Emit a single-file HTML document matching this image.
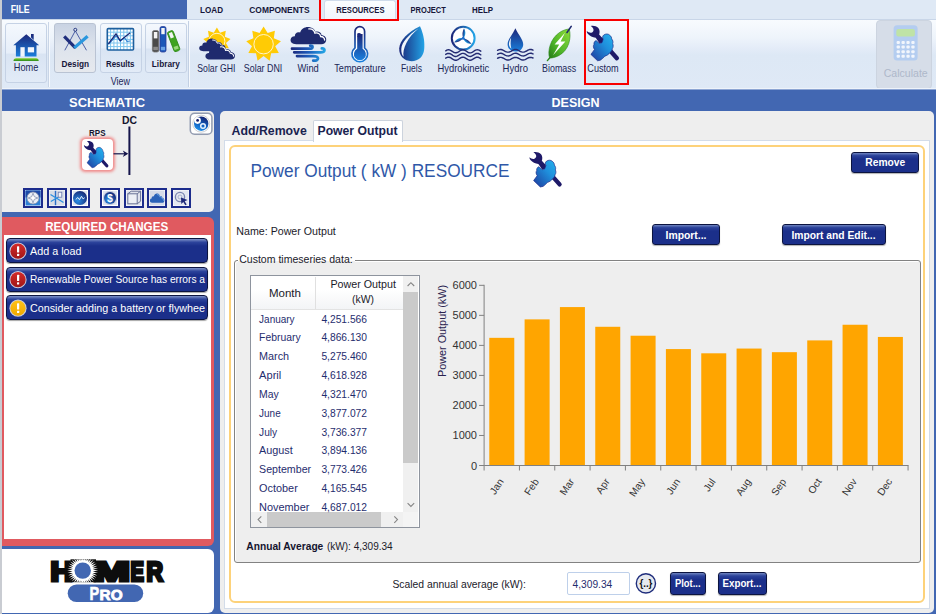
<!DOCTYPE html>
<html lang="en"><head><meta charset="utf-8"><title>HOMER Pro - Power Output Resource</title>
<style>
html,body{margin:0;padding:0;background:#4267b2}
body{width:936px;height:614px;overflow:hidden;position:relative;font-family:"Liberation Sans",sans-serif}
#app{position:absolute;left:0;top:0;width:936px;height:614px;overflow:hidden}
#app div{position:absolute}
#ov{position:absolute;left:0;top:0}
#ov text{font-family:"Liberation Sans",sans-serif}
</style></head>
<body><div id="app">
<div style="left:0px;top:0px;width:936px;height:19px;background:#dfe9f5"></div>
<div style="left:2px;top:0px;width:185px;height:19px;background:#4267b2"></div>
<div style="left:324.4px;top:0px;width:71.6px;height:19px;background:linear-gradient(#fbfdff,#f1f6fc);border:1px solid #cfdbeb;border-bottom:none;box-sizing:border-box;border-radius:3px 3px 0 0"></div>
<div style="left:319px;top:-2px;width:80px;height:22.5px;border:2.2px solid #f80000;box-sizing:border-box;z-index:3"></div>
<div style="left:0px;top:19px;width:936px;height:70.7px;background:linear-gradient(#f8fbfe 0%,#eef4fb 25%,#e4ecf8 40%,#dde8f5 50%,#dfe9f6 100%);border-top:1px solid #c9d6e8;box-sizing:border-box"></div>
<div style="left:188px;top:21px;width:1px;height:66px;background:#c3d0e3"></div>
<div style="left:189px;top:21px;width:1px;height:66px;background:#f6f9fd"></div>
<div style="left:48px;top:22px;width:1px;height:65px;background:#c9d5e6"></div>
<div style="left:49px;top:22px;width:1px;height:65px;background:#f6f9fd"></div>
<div style="left:5px;top:23px;width:41.5px;height:60px;border:1px solid #c5d2e5;border-radius:3px;box-sizing:border-box;background:linear-gradient(#f4f8fd 0%,#e6eef9 50%,#d9e4f3 52%,#e2ebf7 100%)"></div>
<div style="left:54px;top:23px;width:42px;height:50px;border:1px solid #b9c3d3;border-radius:3px;box-sizing:border-box;background:linear-gradient(#c9d3e3 0%,#dde3ec 45%,#e6e9ee 100%)"></div>
<div style="left:100px;top:23px;width:42px;height:50px;border:1px solid #c5d2e5;border-radius:3px;box-sizing:border-box;background:linear-gradient(#f4f8fd 0%,#e6eef9 50%,#d9e4f3 52%,#e2ebf7 100%)"></div>
<div style="left:145px;top:23px;width:42px;height:50px;border:1px solid #c5d2e5;border-radius:3px;box-sizing:border-box;background:linear-gradient(#f4f8fd 0%,#e6eef9 50%,#d9e4f3 52%,#e2ebf7 100%)"></div>
<div style="left:584.2px;top:19.2px;width:44.8px;height:66px;border:2.2px solid #f80000;box-sizing:border-box"></div>
<div style="left:876px;top:20px;width:56px;height:69px;background:#d6dde8;border-radius:4px;border:1px solid #ccd4e0;box-sizing:border-box"></div>
<div style="left:0px;top:89px;width:936px;height:525px;background:#4267b2"></div>
<div style="left:0px;top:89px;width:936px;height:1px;background:#8ea6d4"></div>
<div style="left:0px;top:88px;width:936px;height:1px;background:#eef3fa"></div>
<div style="left:0px;top:19px;width:2px;height:595px;background:#c9ccd2"></div>
<div style="left:0px;top:0px;width:2px;height:19px;background:#c9ccd2"></div>
<div style="left:2px;top:111px;width:212px;height:101px;background:#eeeeee;border-radius:0 5px 5px 0"></div>
<div style="left:82px;top:139px;width:31px;height:31px;background:#fff;border-radius:4px;box-shadow:0 0 3px 1.5px #f08a8a"></div>
<div style="left:23px;top:188px;width:20px;height:20px;background:#dfe6f0;border:2px solid #1c2c8c;box-sizing:border-box;box-shadow:inset 0 0 0 1px #fff"></div>
<div style="left:47px;top:188px;width:20px;height:20px;background:#dfe6f0;border:2px solid #1c2c8c;box-sizing:border-box;box-shadow:inset 0 0 0 1px #fff"></div>
<div style="left:70px;top:188px;width:20px;height:20px;background:#dfe6f0;border:2px solid #1c2c8c;box-sizing:border-box;box-shadow:inset 0 0 0 1px #fff"></div>
<div style="left:100px;top:188px;width:20px;height:20px;background:#dfe6f0;border:2px solid #1c2c8c;box-sizing:border-box;box-shadow:inset 0 0 0 1px #fff"></div>
<div style="left:124px;top:188px;width:20px;height:20px;background:#dfe6f0;border:2px solid #1c2c8c;box-sizing:border-box;box-shadow:inset 0 0 0 1px #fff"></div>
<div style="left:147px;top:188px;width:20px;height:20px;background:#dfe6f0;border:2px solid #1c2c8c;box-sizing:border-box;box-shadow:inset 0 0 0 1px #fff"></div>
<div style="left:171px;top:188px;width:20px;height:20px;background:#dfe6f0;border:2px solid #1c2c8c;box-sizing:border-box;box-shadow:inset 0 0 0 1px #fff"></div>
<div style="left:2px;top:217px;width:212.3px;height:328.5px;background:#e05a60;border-radius:0 6px 6px 0"></div>
<div style="left:3.5px;top:235px;width:207px;height:303.5px;background:#fff"></div>
<div style="left:5.5px;top:238px;width:202.5px;height:25px;border-radius:4px;border:1px solid #0c1440;box-sizing:border-box;background:linear-gradient(#7f93c9 0%,#2d449c 14%,#1b2f8a 30%,#1b2f8a 100%);box-shadow:0 1px 1px rgba(0,0,0,.35)"></div>
<div style="left:5.5px;top:266.5px;width:202.5px;height:25px;border-radius:4px;border:1px solid #0c1440;box-sizing:border-box;background:linear-gradient(#7f93c9 0%,#2d449c 14%,#1b2f8a 30%,#1b2f8a 100%);box-shadow:0 1px 1px rgba(0,0,0,.35)"></div>
<div style="left:5.5px;top:295px;width:202.5px;height:25px;border-radius:4px;border:1px solid #0c1440;box-sizing:border-box;background:linear-gradient(#7f93c9 0%,#2d449c 14%,#1b2f8a 30%,#1b2f8a 100%);box-shadow:0 1px 1px rgba(0,0,0,.35)"></div>
<div style="left:2px;top:548.7px;width:212.3px;height:64.5px;background:#fff;border-radius:0 6px 6px 0"></div>
<div style="left:219.7px;top:111px;width:714.3px;height:501.6px;background:#eeeeee;border-radius:5px"></div>
<div style="left:224.1px;top:140.3px;width:705.9px;height:468.7px;background:#fff;border:1px solid #d3dce9;box-sizing:border-box"></div>
<div style="left:312.5px;top:120px;width:90px;height:22px;background:#fff;border:1px solid #ccd3dd;border-bottom:none;box-sizing:border-box;border-radius:2px 2px 0 0"></div>
<div style="left:229px;top:145px;width:696px;height:458px;border:2px solid #fdd27a;border-radius:6px;box-sizing:border-box;background:#fff"></div>
<div style="left:851px;top:151.5px;width:67.5px;height:21px;border-radius:3px;border:1px solid #0c1440;box-sizing:border-box;background:linear-gradient(#6f84c0 0%,#2b429a 14%,#1b2f8a 32%,#1b2f8a 100%);box-shadow:0 1px 1px rgba(0,0,0,.3)"></div>
<div style="left:651.5px;top:223.5px;width:68px;height:21.5px;border-radius:3px;border:1px solid #0c1440;box-sizing:border-box;background:linear-gradient(#6f84c0 0%,#2b429a 14%,#1b2f8a 32%,#1b2f8a 100%);box-shadow:0 1px 1px rgba(0,0,0,.3)"></div>
<div style="left:781.5px;top:223.5px;width:104px;height:21.5px;border-radius:3px;border:1px solid #0c1440;box-sizing:border-box;background:linear-gradient(#6f84c0 0%,#2b429a 14%,#1b2f8a 32%,#1b2f8a 100%);box-shadow:0 1px 1px rgba(0,0,0,.3)"></div>
<div style="left:669.5px;top:572.4px;width:36px;height:23px;border-radius:3px;border:1px solid #0c1440;box-sizing:border-box;background:linear-gradient(#6f84c0 0%,#2b429a 14%,#1b2f8a 32%,#1b2f8a 100%);box-shadow:0 1px 1px rgba(0,0,0,.3)"></div>
<div style="left:717.5px;top:572.4px;width:49px;height:23px;border-radius:3px;border:1px solid #0c1440;box-sizing:border-box;background:linear-gradient(#6f84c0 0%,#2b429a 14%,#1b2f8a 32%,#1b2f8a 100%);box-shadow:0 1px 1px rgba(0,0,0,.3)"></div>
<div style="left:233.5px;top:260px;width:687px;height:302.5px;background:#eeeeee;border:1px solid #828282;border-radius:3px;box-sizing:border-box;box-shadow:1px 1px 0 #fff, inset 1px 1px 0 #fff"></div>
<div style="left:237.5px;top:255px;width:117px;height:12px;background:#fff"></div>
<div style="left:237.5px;top:260px;width:117px;height:8px;background:linear-gradient(#fff 0,#fff 1px,#eeeeee 1px)"></div>
<div style="left:250.4px;top:275px;width:170px;height:253px;background:#fff;border:1px solid #8e949e;box-sizing:border-box"></div>
<div style="left:251.4px;top:276px;width:151.6px;height:34px;background:linear-gradient(#ffffff 40%,#f3f4f6 100%);border-bottom:1px solid #e3e3e3;box-sizing:border-box"></div>
<div style="left:315px;top:277px;width:1px;height:32px;background:#e0e0e0"></div>
<div style="left:403px;top:276px;width:15px;height:236px;background:#f0f0f0"></div>
<div style="left:403px;top:292px;width:15px;height:170.5px;background:#cacaca"></div>
<div style="left:251.4px;top:512px;width:151.6px;height:15px;background:#f0f0f0"></div>
<div style="left:267px;top:512px;width:114px;height:15px;background:#cacaca"></div>
<div style="left:403px;top:512px;width:15px;height:15px;background:#f4f4f4"></div>
<div style="left:567.4px;top:572.4px;width:62.5px;height:22.5px;background:#fff;border:1px solid #bed0ea;box-sizing:border-box;border-radius:2px"></div>
<svg id="ov" width="936" height="614" viewBox="0 0 936 614">
<rect x="489.27" y="337.83" width="25" height="127.67" fill="#ffa500"/>
<text transform="translate(504.07,481.5) rotate(-56)" text-anchor="end" font-size="10.2" fill="#333">Jan</text>
<rect x="524.60" y="319.37" width="25" height="146.13" fill="#ffa500"/>
<text transform="translate(539.39,481.5) rotate(-56)" text-anchor="end" font-size="10.2" fill="#333">Feb</text>
<rect x="559.92" y="307.08" width="25" height="158.42" fill="#ffa500"/>
<text transform="translate(574.72,481.5) rotate(-56)" text-anchor="end" font-size="10.2" fill="#333">Mar</text>
<rect x="595.25" y="326.79" width="25" height="138.71" fill="#ffa500"/>
<text transform="translate(610.05,481.5) rotate(-56)" text-anchor="end" font-size="10.2" fill="#333">Apr</text>
<rect x="630.59" y="335.73" width="25" height="129.77" fill="#ffa500"/>
<text transform="translate(645.38,481.5) rotate(-56)" text-anchor="end" font-size="10.2" fill="#333">May</text>
<rect x="665.91" y="349.07" width="25" height="116.43" fill="#ffa500"/>
<text transform="translate(680.71,481.5) rotate(-56)" text-anchor="end" font-size="10.2" fill="#333">Jun</text>
<rect x="701.25" y="353.30" width="25" height="112.20" fill="#ffa500"/>
<text transform="translate(716.04,481.5) rotate(-56)" text-anchor="end" font-size="10.2" fill="#333">Jul</text>
<rect x="736.58" y="348.56" width="25" height="116.94" fill="#ffa500"/>
<text transform="translate(751.38,481.5) rotate(-56)" text-anchor="end" font-size="10.2" fill="#333">Aug</text>
<rect x="771.90" y="352.18" width="25" height="113.32" fill="#ffa500"/>
<text transform="translate(786.70,481.5) rotate(-56)" text-anchor="end" font-size="10.2" fill="#333">Sep</text>
<rect x="807.24" y="340.41" width="25" height="125.09" fill="#ffa500"/>
<text transform="translate(822.03,481.5) rotate(-56)" text-anchor="end" font-size="10.2" fill="#333">Oct</text>
<rect x="842.57" y="324.75" width="25" height="140.75" fill="#ffa500"/>
<text transform="translate(857.37,481.5) rotate(-56)" text-anchor="end" font-size="10.2" fill="#333">Nov</text>
<rect x="877.89" y="336.94" width="25" height="128.56" fill="#ffa500"/>
<text transform="translate(892.69,481.5) rotate(-56)" text-anchor="end" font-size="10.2" fill="#333">Dec</text>
<path d="M484.1,284.82V465.5H908.56" fill="none" stroke="#808080" stroke-width="1"/>
<path d="M484.10,465.5v5" stroke="#808080" stroke-width="1"/>
<path d="M519.43,465.5v5" stroke="#808080" stroke-width="1"/>
<path d="M554.76,465.5v5" stroke="#808080" stroke-width="1"/>
<path d="M590.09,465.5v5" stroke="#808080" stroke-width="1"/>
<path d="M625.42,465.5v5" stroke="#808080" stroke-width="1"/>
<path d="M660.75,465.5v5" stroke="#808080" stroke-width="1"/>
<path d="M696.08,465.5v5" stroke="#808080" stroke-width="1"/>
<path d="M731.41,465.5v5" stroke="#808080" stroke-width="1"/>
<path d="M766.74,465.5v5" stroke="#808080" stroke-width="1"/>
<path d="M802.07,465.5v5" stroke="#808080" stroke-width="1"/>
<path d="M837.40,465.5v5" stroke="#808080" stroke-width="1"/>
<path d="M872.73,465.5v5" stroke="#808080" stroke-width="1"/>
<path d="M908.06,465.5v5" stroke="#808080" stroke-width="1"/>
<path d="M479.1,465.50h5" stroke="#808080" stroke-width="1"/>
<text x="477" y="469.5" font-size="11" fill="#333" text-anchor="end">0</text>
<path d="M479.1,435.47h5" stroke="#808080" stroke-width="1"/>
<text x="477" y="439.47" font-size="11" fill="#333" text-anchor="end">1000</text>
<path d="M479.1,405.44h5" stroke="#808080" stroke-width="1"/>
<text x="477" y="409.44" font-size="11" fill="#333" text-anchor="end">2000</text>
<path d="M479.1,375.41h5" stroke="#808080" stroke-width="1"/>
<text x="477" y="379.41" font-size="11" fill="#333" text-anchor="end">3000</text>
<path d="M479.1,345.38h5" stroke="#808080" stroke-width="1"/>
<text x="477" y="349.38" font-size="11" fill="#333" text-anchor="end">4000</text>
<path d="M479.1,315.35h5" stroke="#808080" stroke-width="1"/>
<text x="477" y="319.35" font-size="11" fill="#333" text-anchor="end">5000</text>
<path d="M479.1,285.32h5" stroke="#808080" stroke-width="1"/>
<text x="477" y="289.32" font-size="11" fill="#333" text-anchor="end">6000</text>
<text transform="translate(445.5,377) rotate(-90)" font-size="11" fill="#2a2350" textLength="92" lengthAdjust="spacingAndGlyphs">Power Output (kW)</text>
<text x="10.7" y="13.2" font-size="11" font-weight="700" fill="#fff" textLength="19" lengthAdjust="spacingAndGlyphs">FILE</text>
<text x="200" y="12.7" font-size="9.8" font-weight="700" fill="#16163a" textLength="23" lengthAdjust="spacingAndGlyphs">LOAD</text>
<text x="249.3" y="12.7" font-size="9.8" font-weight="700" fill="#16163a" textLength="60.2" lengthAdjust="spacingAndGlyphs">COMPONENTS</text>
<text x="336.3" y="12.7" font-size="9.8" font-weight="700" fill="#16163a" textLength="48.2" lengthAdjust="spacingAndGlyphs">RESOURCES</text>
<text x="410.5" y="12.7" font-size="9.8" font-weight="700" fill="#16163a" textLength="35.3" lengthAdjust="spacingAndGlyphs">PROJECT</text>
<text x="472.1" y="12.7" font-size="9.8" font-weight="700" fill="#16163a" textLength="21" lengthAdjust="spacingAndGlyphs">HELP</text>
<text x="13.8" y="71.3" font-size="10.3" fill="#1b2656" textLength="24.5" lengthAdjust="spacingAndGlyphs">Home</text>
<text x="61.5" y="67.3" font-size="9.3" font-weight="700" fill="#16163a" textLength="27.5" lengthAdjust="spacingAndGlyphs">Design</text>
<text x="106" y="67.3" font-size="9.3" font-weight="700" fill="#16163a" textLength="28.5" lengthAdjust="spacingAndGlyphs">Results</text>
<text x="151.8" y="67.3" font-size="9.3" font-weight="700" fill="#16163a" textLength="28" lengthAdjust="spacingAndGlyphs">Library</text>
<text x="110.8" y="85" font-size="10.3" fill="#1b2656" textLength="19.2" lengthAdjust="spacingAndGlyphs">View</text>
<text x="197.3" y="71.7" font-size="10.3" fill="#1b2656" textLength="38.1" lengthAdjust="spacingAndGlyphs">Solar GHI</text>
<text x="243.8" y="71.7" font-size="10.3" fill="#1b2656" textLength="38.5" lengthAdjust="spacingAndGlyphs">Solar DNI</text>
<text x="297.5" y="71.7" font-size="10.3" fill="#1b2656" textLength="21.3" lengthAdjust="spacingAndGlyphs">Wind</text>
<text x="334.3" y="71.7" font-size="10.3" fill="#1b2656" textLength="51.2" lengthAdjust="spacingAndGlyphs">Temperature</text>
<text x="401" y="71.7" font-size="10.3" fill="#1b2656" textLength="21" lengthAdjust="spacingAndGlyphs">Fuels</text>
<text x="437.4" y="71.7" font-size="10.3" fill="#1b2656" textLength="51.8" lengthAdjust="spacingAndGlyphs">Hydrokinetic</text>
<text x="502.6" y="71.7" font-size="10.3" fill="#1b2656" textLength="25.4" lengthAdjust="spacingAndGlyphs">Hydro</text>
<text x="542.1" y="71.7" font-size="10.3" fill="#1b2656" textLength="34" lengthAdjust="spacingAndGlyphs">Biomass</text>
<text x="587.3" y="71.7" font-size="10.3" fill="#1b2656" textLength="31.4" lengthAdjust="spacingAndGlyphs">Custom</text>
<text x="883.7" y="76.7" font-size="11" fill="#aeb8ca" textLength="44" lengthAdjust="spacingAndGlyphs">Calculate</text>
<text x="69" y="107" font-size="13" font-weight="700" fill="#fff" textLength="76" lengthAdjust="spacingAndGlyphs">SCHEMATIC</text>
<text x="551.5" y="107" font-size="13" font-weight="700" fill="#fff" textLength="48" lengthAdjust="spacingAndGlyphs">DESIGN</text>
<text x="89" y="135.8" font-size="9.5" font-weight="700" fill="#14142e" textLength="16.5" lengthAdjust="spacingAndGlyphs">RPS</text>
<text x="122" y="124.4" font-size="11.5" font-weight="700" fill="#14142e" textLength="15" lengthAdjust="spacingAndGlyphs">DC</text>
<text x="45.2" y="230.8" font-size="12" font-weight="700" fill="#fff" textLength="123" lengthAdjust="spacingAndGlyphs">REQUIRED CHANGES</text>
<text x="30" y="254.9" font-size="11.5" fill="#fff" textLength="51.5" lengthAdjust="spacingAndGlyphs">Add a load</text>
<text x="30" y="283.4" font-size="11.5" fill="#fff" textLength="175" lengthAdjust="spacingAndGlyphs">Renewable Power Source has errors a</text>
<text x="30" y="311.9" font-size="11.5" fill="#fff" textLength="175" lengthAdjust="spacingAndGlyphs">Consider adding a battery or flywhee</text>
<text x="231.6" y="134.7" font-size="12.5" font-weight="700" fill="#1a2350" textLength="75.2" lengthAdjust="spacingAndGlyphs">Add/Remove</text>
<text x="317.5" y="134.7" font-size="12.5" font-weight="700" fill="#1a2350" textLength="80" lengthAdjust="spacingAndGlyphs">Power Output</text>
<text x="250.5" y="177" font-size="18" fill="#2f58a8" textLength="259" lengthAdjust="spacingAndGlyphs">Power Output ( kW ) RESOURCE</text>
<text x="236.3" y="235.4" font-size="11.5" fill="#1a1a2a" textLength="99.5" lengthAdjust="spacingAndGlyphs">Name: Power Output</text>
<text x="239.2" y="263" font-size="11.5" fill="#1a1a2a" textLength="113.5" lengthAdjust="spacingAndGlyphs">Custom timeseries data:</text>
<text x="865.3" y="165.8" font-size="11" font-weight="700" fill="#fff" textLength="40" lengthAdjust="spacingAndGlyphs">Remove</text>
<text x="665.5" y="238.5" font-size="11" font-weight="700" fill="#fff" textLength="41" lengthAdjust="spacingAndGlyphs">Import...</text>
<text x="791.5" y="238.5" font-size="11" font-weight="700" fill="#fff" textLength="84" lengthAdjust="spacingAndGlyphs">Import and Edit...</text>
<text x="675" y="587.2" font-size="11" font-weight="700" fill="#fff" textLength="25.5" lengthAdjust="spacingAndGlyphs">Plot...</text>
<text x="722.5" y="587.2" font-size="11" font-weight="700" fill="#fff" textLength="39" lengthAdjust="spacingAndGlyphs">Export...</text>
<text x="392.4" y="587.7" font-size="11.5" fill="#1a1a2a" textLength="133.5" lengthAdjust="spacingAndGlyphs">Scaled annual average (kW):</text>
<text x="572.6" y="587.7" font-size="11.5" fill="#1f2d6e" textLength="39.7" lengthAdjust="spacingAndGlyphs">4,309.34</text>
<text x="246.3" y="549.6" font-size="11.5" font-weight="700" fill="#14142e" textLength="77" lengthAdjust="spacingAndGlyphs">Annual Average</text>
<text x="326.9" y="549.6" font-size="11.5" fill="#1a1a2a" textLength="65.8" lengthAdjust="spacingAndGlyphs">(kW): 4,309.34</text>
<text x="284.9" y="297" font-size="11.5" fill="#1a1a2a" text-anchor="middle">Month</text>
<text x="330.4" y="288.2" font-size="11.5" fill="#1a1a2a" textLength="65.6" lengthAdjust="spacingAndGlyphs">Power Output</text>
<text x="352" y="302.6" font-size="11.5" fill="#1a1a2a" textLength="22" lengthAdjust="spacingAndGlyphs">(kW)</text>
<clipPath id="tclip"><rect x="252" y="310" width="151" height="202.5"/></clipPath><g clip-path="url(#tclip)">
<text x="259.1" y="322.6" font-size="11.5" fill="#1f2d6e" textLength="35.5" lengthAdjust="spacingAndGlyphs">January</text>
<text x="321.4" y="322.6" font-size="11.5" fill="#1f2d6e" textLength="45.6" lengthAdjust="spacingAndGlyphs">4,251.566</text>
<text x="259.1" y="341.42" font-size="11.5" fill="#1f2d6e" textLength="41.5" lengthAdjust="spacingAndGlyphs">February</text>
<text x="321.4" y="341.42" font-size="11.5" fill="#1f2d6e" textLength="45.6" lengthAdjust="spacingAndGlyphs">4,866.130</text>
<text x="259.1" y="360.24" font-size="11.5" fill="#1f2d6e" textLength="30" lengthAdjust="spacingAndGlyphs">March</text>
<text x="321.4" y="360.24" font-size="11.5" fill="#1f2d6e" textLength="45.6" lengthAdjust="spacingAndGlyphs">5,275.460</text>
<text x="259.1" y="379.06" font-size="11.5" fill="#1f2d6e" textLength="22.2" lengthAdjust="spacingAndGlyphs">April</text>
<text x="321.4" y="379.06" font-size="11.5" fill="#1f2d6e" textLength="45.6" lengthAdjust="spacingAndGlyphs">4,618.928</text>
<text x="259.1" y="397.88" font-size="11.5" fill="#1f2d6e" textLength="19.7" lengthAdjust="spacingAndGlyphs">May</text>
<text x="321.4" y="397.88" font-size="11.5" fill="#1f2d6e" textLength="45.6" lengthAdjust="spacingAndGlyphs">4,321.470</text>
<text x="259.1" y="416.7" font-size="11.5" fill="#1f2d6e" textLength="21.6" lengthAdjust="spacingAndGlyphs">June</text>
<text x="321.4" y="416.7" font-size="11.5" fill="#1f2d6e" textLength="45.6" lengthAdjust="spacingAndGlyphs">3,877.072</text>
<text x="259.1" y="435.52" font-size="11.5" fill="#1f2d6e" textLength="18.1" lengthAdjust="spacingAndGlyphs">July</text>
<text x="321.4" y="435.52" font-size="11.5" fill="#1f2d6e" textLength="45.6" lengthAdjust="spacingAndGlyphs">3,736.377</text>
<text x="259.1" y="454.34" font-size="11.5" fill="#1f2d6e" textLength="33.7" lengthAdjust="spacingAndGlyphs">August</text>
<text x="321.4" y="454.34" font-size="11.5" fill="#1f2d6e" textLength="45.6" lengthAdjust="spacingAndGlyphs">3,894.136</text>
<text x="259.1" y="473.16" font-size="11.5" fill="#1f2d6e" textLength="52" lengthAdjust="spacingAndGlyphs">September</text>
<text x="321.4" y="473.16" font-size="11.5" fill="#1f2d6e" textLength="45.6" lengthAdjust="spacingAndGlyphs">3,773.426</text>
<text x="259.1" y="491.98" font-size="11.5" fill="#1f2d6e" textLength="38.7" lengthAdjust="spacingAndGlyphs">October</text>
<text x="321.4" y="491.98" font-size="11.5" fill="#1f2d6e" textLength="45.6" lengthAdjust="spacingAndGlyphs">4,165.545</text>
<text x="259.1" y="510.8" font-size="11.5" fill="#1f2d6e" textLength="50.3" lengthAdjust="spacingAndGlyphs">November</text>
<text x="321.4" y="510.8" font-size="11.5" fill="#1f2d6e" textLength="45.6" lengthAdjust="spacingAndGlyphs">4,687.012</text>
</g>
<path d="M407.6,286l3.3,-3.3l3.3,3.3" fill="none" stroke="#858585" stroke-width="1.1"/>
<path d="M407.6,503.2l3.3,3.3l3.3,-3.300" fill="none" stroke="#858585" stroke-width="1.1"/>
<path d="M261.3,516.3l-3.2,3.3l3.2,3.3" fill="none" stroke="#858585" stroke-width="1.1"/>
<path d="M394.300,516.3l3.2,3.3l-3.2,3.3" fill="none" stroke="#858585" stroke-width="1.1"/>
<defs>
<linearGradient id="gNB" x1="0" y1="0" x2="0" y2="1"><stop offset="0" stop-color="#1b2679"/><stop offset="1" stop-color="#1a7fdc"/></linearGradient>
<linearGradient id="gNBh" x1="0" y1="0" x2="1" y2="0"><stop offset="0" stop-color="#1b2679"/><stop offset="1" stop-color="#22a3e6"/></linearGradient>
<linearGradient id="gNBd" x1="0" y1="0" x2="1" y2="1"><stop offset="0" stop-color="#1b2679"/><stop offset="1" stop-color="#22a3e6"/></linearGradient>
<linearGradient id="gHand" x1="0" y1="1" x2="1" y2="0"><stop offset="0" stop-color="#1d3a9c"/><stop offset="0.6" stop-color="#1f8fdc"/><stop offset="1" stop-color="#25b4ee"/></linearGradient>
<linearGradient id="gGreen" x1="0" y1="0" x2="0" y2="1"><stop offset="0" stop-color="#7fd12a"/><stop offset="1" stop-color="#2c8a1c"/></linearGradient>
<linearGradient id="gLeaf" x1="1" y1="0" x2="0" y2="1"><stop offset="0" stop-color="#8fdc3a"/><stop offset="0.6" stop-color="#4fb528"/><stop offset="1" stop-color="#257a18"/></linearGradient>
<linearGradient id="gWind" gradientUnits="userSpaceOnUse" x1="291" y1="0" x2="326" y2="0"><stop offset="0" stop-color="#1b2679"/><stop offset="0.45" stop-color="#1d55b4"/><stop offset="1" stop-color="#25aae8"/></linearGradient>
<radialGradient id="gBall" cx="0.35" cy="0.7" r="0.8"><stop offset="0" stop-color="#2a8ee6"/><stop offset="1" stop-color="#14206e"/></radialGradient>
<linearGradient id="gRed" x1="0" y1="0" x2="0" y2="1"><stop offset="0" stop-color="#d42a2a"/><stop offset="1" stop-color="#a01616"/></linearGradient>
<linearGradient id="gYel" x1="0" y1="0" x2="0" y2="1"><stop offset="0" stop-color="#ffc21a"/><stop offset="1" stop-color="#f0a800"/></linearGradient>
</defs>
<g>
<path d="M26.3,34.3 L39.2,45.2 L36.5,45.2 L36.5,56.6 L15.9,56.6 L15.9,45.2 L13.3,45.2 Z M31,33.9 h2.7 v6 l-2.7,-2.3z" fill="url(#gNB)"/>
<rect x="20.4" y="47.2" width="4.3" height="9.6" fill="#f2f6fc"/>
<rect x="27.8" y="47.2" width="6.3" height="5.2" fill="#f2f6fc"/>
<path d="M13.5,61 q0,-2.7 2.7,-2.7 h19.8 q2.7,0 2.7,2.7z" fill="url(#gGreen)"/>
</g>
<g fill="none">
<path d="M75.3,30.8 L64.8,50.3 M75.3,30.8 L86.5,50.3" stroke="#3b4f9c" stroke-width="0.9"/>
<circle cx="75.3" cy="29.8" r="1.5" stroke="#24357f" stroke-width="1" fill="#dfe6f0"/>
<path d="M64.2,36.4 L75.4,47.8" stroke="#1f2e7c" stroke-width="3.2"/>
<path d="M74.2,47.9 L87.6,36.2" stroke="#2a97de" stroke-width="3.2"/>
</g>
<g><rect x="107.3" y="28.6" width="26.2" height="21.4" fill="#fff"/><path d="M110.6,28.6v21.4" stroke="#7cc4ee" stroke-width="1"/><path d="M113.9,28.6v21.4" stroke="#7cc4ee" stroke-width="1"/><path d="M117.2,28.6v21.4" stroke="#7cc4ee" stroke-width="1"/><path d="M120.5,28.6v21.4" stroke="#7cc4ee" stroke-width="1"/><path d="M123.8,28.6v21.4" stroke="#7cc4ee" stroke-width="1"/><path d="M127.1,28.6v21.4" stroke="#7cc4ee" stroke-width="1"/><path d="M130.4,28.6v21.4" stroke="#7cc4ee" stroke-width="1"/><path d="M107.3,32.2h26.2" stroke="#7cc4ee" stroke-width="1"/><path d="M107.3,35.8h26.2" stroke="#7cc4ee" stroke-width="1"/><path d="M107.3,39.4h26.2" stroke="#7cc4ee" stroke-width="1"/><path d="M107.3,43.0h26.2" stroke="#7cc4ee" stroke-width="1"/><path d="M107.3,46.6h26.2" stroke="#7cc4ee" stroke-width="1"/><rect x="107.3" y="28.6" width="26.2" height="21.4" fill="none" stroke="#1d5f9e" stroke-width="1.6" rx="1"/><path d="M108.5,44.5 L116.2,35.8 L120.3,41.2 L124.5,37.5 L127,41.5 L130,41" fill="none" stroke="#2a7fd0" stroke-width="1.1"/><path d="M108.3,43.8 L116,33.8 L120.2,40.6 L130.2,32.8" fill="none" stroke="#1c2470" stroke-width="1.2"/></g>
<g>
<rect x="152.4" y="30.6" width="6.4" height="21.4" rx="1.8" fill="#4a4a4a" stroke="#777" stroke-width="0.8"/>
<rect x="153.8" y="32" width="3.6" height="6.4" fill="#f4f4f4"/>
<rect x="153.3" y="46.8" width="4.6" height="3.4" fill="#8a8a8a"/>
<rect x="160" y="26.6" width="6" height="25.4" rx="1.8" fill="#1c57b8" stroke="#2a3a96" stroke-width="0.8"/>
<rect x="161.3" y="28" width="3.4" height="6.2" fill="#f4f4f4"/>
<rect x="160.9" y="46.8" width="4.2" height="3.4" fill="#6aa2e6"/>
<g transform="rotate(-21 173.5 41)">
<rect x="170.5" y="30.6" width="6.2" height="21.2" rx="1.8" fill="#3fa320" stroke="#2f8a18" stroke-width="0.8"/>
<rect x="171.9" y="32" width="3.4" height="5.6" fill="#f4f4f4"/>
<rect x="171.4" y="46.6" width="4.4" height="3.2" fill="#9ad77c"/>
</g>
</g>
<g><polygon points="216.90,27.50 220.05,32.65 225.77,30.73 224.87,36.70 230.49,38.90 225.96,42.90 228.85,48.20 222.81,48.35 221.62,54.27 216.90,50.50 212.18,54.27 210.99,48.35 204.95,48.20 207.84,42.90 203.31,38.90 208.93,36.70 208.03,30.73 213.75,32.65" fill="#ffcb05"/><circle cx="216.9" cy="41.3" r="8.0" fill="none" stroke="#fff8dc" stroke-width="0.9"/><g transform="translate(199,38.2) scale(0.7361,0.7222)"><path d="M6,18 C1.5,18 0,15.5 0.3,13.3 C0.6,11 2.6,9.8 4.6,10 C4.2,6.8 7.3,5 9.8,6.2 C10.8,2.3 15,0 18.8,0.6 C22.3,1.1 24.6,3.3 25.2,5.6 C27.8,4.6 31,6 31.3,9 C34.3,9 36.3,11.3 35.9,14 C35.6,16.6 33.6,18 31,18 Z" fill="#1f2a6e"/><path d="M18.5,2.5 C21.8,2.2 24,4.2 24.6,6.8 C27.4,6 30,7.4 30.3,10.2 C32.6,10.2 34.4,11.8 34.3,13.8" fill="none" stroke="#fff" stroke-width="1.3" stroke-linecap="round"/></g><g transform="translate(205.2,44.8) scale(0.8278,0.8222)"><path d="M6,18 C1.5,18 0,15.5 0.3,13.3 C0.6,11 2.6,9.8 4.6,10 C4.2,6.8 7.3,5 9.8,6.2 C10.8,2.3 15,0 18.8,0.6 C22.3,1.1 24.6,3.3 25.2,5.6 C27.8,4.6 31,6 31.3,9 C34.3,9 36.3,11.3 35.9,14 C35.6,16.6 33.6,18 31,18 Z" fill="#1f2a6e"/><path d="M18.5,2.5 C21.8,2.2 24,4.2 24.6,6.8 C27.4,6 30,7.4 30.3,10.2 C32.6,10.2 34.4,11.8 34.3,13.8" fill="none" stroke="#fff" stroke-width="1.3" stroke-linecap="round"/></g></g>
<g><polygon points="263.60,26.60 267.64,33.11 274.91,30.72 273.82,38.30 280.93,41.14 275.22,46.25 278.84,53.00 271.18,53.24 269.62,60.74 263.60,56.00 257.58,60.74 256.02,53.24 248.36,53.00 251.98,46.25 246.27,41.14 253.38,38.30 252.29,30.72 259.56,33.11" fill="#ffcb05"/><circle cx="263.6" cy="44.2" r="9.7" fill="none" stroke="#fff8dc" stroke-width="0.9"/></g>
<g><g transform="translate(290.3,26.4) scale(1.0000,0.9889)"><path d="M6,18 C1.5,18 0,15.5 0.3,13.3 C0.6,11 2.6,9.8 4.6,10 C4.2,6.8 7.3,5 9.8,6.2 C10.8,2.3 15,0 18.8,0.6 C22.3,1.1 24.6,3.3 25.2,5.6 C27.8,4.6 31,6 31.3,9 C34.3,9 36.3,11.3 35.9,14 C35.6,16.6 33.6,18 31,18 Z" fill="#1f2a6e"/><path d="M18.5,2.5 C21.8,2.2 24,4.2 24.6,6.8 C27.4,6 30,7.4 30.3,10.2 C32.6,10.2 34.4,11.8 34.3,13.8" fill="none" stroke="#fff" stroke-width="1.3" stroke-linecap="round"/></g>
<g fill="none" stroke="url(#gWind)" stroke-width="2.7" stroke-linecap="round">
<path d="M292,48.7 H309.5 C313.4,48.7 313.6,45.2 310.2,45.6"/>
<path d="M294.2,52.3 H320.5 C325.6,52.3 325.6,48 321.8,48.4"/>
<path d="M297,56.1 H313 C319.8,56.2 319.6,61.2 313.2,60.6"/>
</g>
<path d="M290.8,47.6 L298,57 L303,57 L303,47.6Z" fill="url(#gNBh)" opacity="0"/>
</g>
<g>
<path d="M355,31.5 a4.8,4.8 0 0 1 9.6,0 V47.8 a7.8,7.8 0 1 1 -9.6,0 Z" fill="#fff" stroke="url(#gNB)" stroke-width="1.7"/>
<path d="M357.2,34 h5.4 V48.8 a6,6 0 1 1 -5.4,0 Z" fill="url(#gNB)"/>
<path d="M357.5,33.6h3 M357.5,36.4h2.2" stroke="#1b2679" stroke-width="1"/>
<path d="M357.2,34h5.4v-2.5a2.7,2.7 0 0 0 -5.4,0z" fill="#fff" opacity="0"/>
</g>
<g>
<path d="M420,26.3 C424.5,36 424.6,44 424.2,49 C423.6,56.5 418.5,61.2 411.5,61.2 C404,61.2 399,56 399.2,48.6 C399.5,40.5 408,32 420,26.3 Z" fill="url(#gNBh)"/>
<path d="M418.4,28.6 C408,35.5 401.8,42 401.3,49 C401.1,52.6 402.2,55.2 403.6,56.8 C402.2,49 407.5,37.5 418.4,28.6 Z" fill="#f2f6fc"/>
</g>
<g><circle cx="463.2" cy="38.2" r="11.4" fill="#fff" stroke="url(#gNBh)" stroke-width="2"/><path d="M0,0 C-1.6,-3 -1.8,-6.5 -0.6,-9.6 C1.6,-7 2.2,-3.2 0,0Z" transform="translate(463.2,38.2) rotate(8) scale(1.05)" fill="url(#gNBh)"/><path d="M0,0 C-1.6,-3 -1.8,-6.5 -0.6,-9.6 C1.6,-7 2.2,-3.2 0,0Z" transform="translate(463.2,38.2) rotate(128) scale(1.05)" fill="url(#gNBh)"/><path d="M0,0 C-1.6,-3 -1.8,-6.5 -0.6,-9.6 C1.6,-7 2.2,-3.2 0,0Z" transform="translate(463.2,38.2) rotate(248) scale(1.05)" fill="url(#gNBh)"/><circle cx="463.2" cy="38.2" r="1.5" fill="#1f6fcf"/><polyline points="445.70,50.77 446.58,50.26 447.45,49.91 448.33,49.75 449.21,49.82 450.09,50.11 450.96,50.56 451.84,51.13 452.72,51.71 453.60,52.24 454.48,52.63 455.35,52.83 456.23,52.81 457.11,52.57 457.99,52.14 458.86,51.59 459.74,51.00 460.62,50.46 461.50,50.03 462.37,49.79 463.25,49.77 464.13,49.97 465.00,50.36 465.88,50.89 466.76,51.48 467.64,52.04 468.51,52.49 469.39,52.78 470.27,52.85 471.15,52.69 472.02,52.33 472.90,51.83 473.78,51.25 474.66,50.67 475.54,50.19 476.41,49.86 477.29,49.75 478.17,49.86 479.05,50.18 479.92,50.66 480.80,51.23" fill="none" stroke="#262d73" stroke-width="1.45" stroke-linecap="round" stroke-linejoin="round"/><polyline points="445.70,54.37 446.58,53.86 447.45,53.51 448.33,53.35 449.21,53.42 450.09,53.71 450.96,54.16 451.84,54.73 452.72,55.31 453.60,55.84 454.48,56.23 455.35,56.43 456.23,56.41 457.11,56.17 457.99,55.74 458.86,55.19 459.74,54.60 460.62,54.06 461.50,53.63 462.37,53.39 463.25,53.37 464.13,53.57 465.00,53.96 465.88,54.49 466.76,55.08 467.64,55.64 468.51,56.09 469.39,56.38 470.27,56.45 471.15,56.29 472.02,55.93 472.90,55.43 473.78,54.85 474.66,54.27 475.54,53.79 476.41,53.46 477.29,53.35 478.17,53.46 479.05,53.78 479.92,54.26 480.80,54.83" fill="none" stroke="#262d73" stroke-width="1.45" stroke-linecap="round" stroke-linejoin="round"/><polyline points="445.70,58.17 446.58,57.66 447.45,57.31 448.33,57.15 449.21,57.22 450.09,57.51 450.96,57.96 451.84,58.53 452.72,59.11 453.60,59.64 454.48,60.03 455.35,60.23 456.23,60.21 457.11,59.97 457.99,59.54 458.86,58.99 459.74,58.40 460.62,57.86 461.50,57.43 462.37,57.19 463.25,57.17 464.13,57.37 465.00,57.76 465.88,58.29 466.76,58.88 467.64,59.44 468.51,59.89 469.39,60.18 470.27,60.25 471.15,60.09 472.02,59.73 472.90,59.23 473.78,58.65 474.66,58.07 475.54,57.59 476.41,57.26 477.29,57.15 478.17,57.26 479.05,57.58 479.92,58.06 480.80,58.63" fill="none" stroke="#262d73" stroke-width="1.45" stroke-linecap="round" stroke-linejoin="round"/></g>
<g><path d="M515.4,28.2 C518.5,35 523.2,39.5 523.2,44.2 C523.2,48.8 519.8,51.6 515.4,51.6 C511,51.6 507.6,48.8 507.6,44.2 C507.6,39.5 512.3,35 515.4,28.2Z" fill="url(#gNB)"/><path d="M511.2,37.5 C509.6,40.2 508.8,42.4 509,44.6 C509.2,46.6 510.2,48 511.4,48.8 C510.4,45.6 510.4,41.6 511.2,37.5Z" fill="#f2f6fc"/><polyline points="497.60,50.33 498.49,49.90 499.37,49.60 500.25,49.46 501.14,49.50 502.03,49.72 502.91,50.08 503.80,50.54 504.68,51.04 505.56,51.51 506.45,51.88 507.34,52.10 508.22,52.14 509.11,52.01 509.99,51.71 510.88,51.28 511.76,50.79 512.64,50.31 513.53,49.88 514.41,49.59 515.30,49.45 516.19,49.51 517.07,49.73 517.96,50.10 518.84,50.57 519.73,51.07 520.61,51.53 521.50,51.89 522.38,52.10 523.26,52.14 524.15,52.00 525.03,51.69 525.92,51.26 526.81,50.77 527.69,50.28 528.58,49.87 529.46,49.58 530.35,49.45 531.23,49.51 532.12,49.75 533.00,50.12" fill="none" stroke="#262d73" stroke-width="1.45" stroke-linecap="round" stroke-linejoin="round"/><polyline points="497.60,54.13 498.49,53.70 499.37,53.40 500.25,53.26 501.14,53.30 502.03,53.52 502.91,53.88 503.80,54.34 504.68,54.84 505.56,55.31 506.45,55.68 507.34,55.90 508.22,55.94 509.11,55.81 509.99,55.51 510.88,55.08 511.76,54.59 512.64,54.11 513.53,53.68 514.41,53.39 515.30,53.25 516.19,53.31 517.07,53.53 517.96,53.90 518.84,54.37 519.73,54.87 520.61,55.33 521.50,55.69 522.38,55.90 523.26,55.94 524.15,55.80 525.03,55.49 525.92,55.06 526.81,54.57 527.69,54.08 528.58,53.67 529.46,53.38 530.35,53.25 531.23,53.31 532.12,53.55 533.00,53.92" fill="none" stroke="#262d73" stroke-width="1.45" stroke-linecap="round" stroke-linejoin="round"/><polyline points="497.60,58.23 498.49,57.80 499.37,57.50 500.25,57.36 501.14,57.40 502.03,57.62 502.91,57.98 503.80,58.44 504.68,58.94 505.56,59.41 506.45,59.78 507.34,60.00 508.22,60.04 509.11,59.91 509.99,59.61 510.88,59.18 511.76,58.69 512.64,58.21 513.53,57.78 514.41,57.49 515.30,57.35 516.19,57.41 517.07,57.63 517.96,58.00 518.84,58.47 519.73,58.97 520.61,59.43 521.50,59.79 522.38,60.00 523.26,60.04 524.15,59.90 525.03,59.59 525.92,59.16 526.81,58.67 527.69,58.18 528.58,57.77 529.46,57.48 530.35,57.35 531.23,57.41 532.12,57.65 533.00,58.02" fill="none" stroke="#262d73" stroke-width="1.45" stroke-linecap="round" stroke-linejoin="round"/></g>
<g>
<path d="M569.3,29 C571.5,38 569,50 559,55.5 C555,57.6 551,58.3 549.6,58 C547.2,51 550.5,38.5 559.5,32.5 C563,30.2 566.5,29.2 569.3,29Z" fill="url(#gLeaf)" stroke="#2d8a1c" stroke-width="0.6"/>
<path d="M571.2,26.4 L567,32.5" stroke="#1f2a6e" stroke-width="1.6" stroke-linecap="round"/>
<path d="M549.8,57.8 L547.4,60.6" stroke="#2d8a1c" stroke-width="1.4" stroke-linecap="round"/>
<path d="M565,32.8 L554.6,44.6 L559.2,44.6 L553,55.2 L565.4,41.6 L560.6,41.6 Z" fill="#fff"/>
</g>
<g transform="translate(577.3,18.8) scale(0.07657)">
<path d="M300,270 L517,515" stroke="#1e1968" stroke-width="56" stroke-linecap="round"/>
<path d="M345,212 C370,193 405,195 420,212 C440,225 452,248 448,262 C466,280 470,308 462,325 C473,345 470,375 458,388 C455,415 440,430 425,442 C410,465 385,480 360,488 C340,510 318,530 300,541 L265,548 L178,465 L225,400 C208,380 205,350 218,335 C214,310 226,292 245,284 L290,322 L322,312 L338,268 C325,245 330,225 345,212 Z" fill="url(#gHand)" stroke="#1c2a8a" stroke-width="9" stroke-linejoin="round"/>
<path d="M175,95 C205,85 250,95 275,120 C295,145 295,180 285,205 L336,262 L292,322 L240,248 C200,245 160,225 140,200 C128,185 122,170 125,160 C140,175 160,185 180,182 C200,178 212,160 212,145 C212,125 195,105 175,95 Z" fill="#1e1968"/>
</g>
<g transform="translate(520,145) scale(0.07657)">
<path d="M300,270 L517,515" stroke="#1e1968" stroke-width="56" stroke-linecap="round"/>
<path d="M345,212 C370,193 405,195 420,212 C440,225 452,248 448,262 C466,280 470,308 462,325 C473,345 470,375 458,388 C455,415 440,430 425,442 C410,465 385,480 360,488 C340,510 318,530 300,541 L265,548 L178,465 L225,400 C208,380 205,350 218,335 C214,310 226,292 245,284 L290,322 L322,312 L338,268 C325,245 330,225 345,212 Z" fill="url(#gHand)" stroke="#1c2a8a" stroke-width="9" stroke-linejoin="round"/>
<path d="M175,95 C205,85 250,95 275,120 C295,145 295,180 285,205 L336,262 L292,322 L240,248 C200,245 160,225 140,200 C128,185 122,170 125,160 C140,175 160,185 180,182 C200,178 212,160 212,145 C212,125 195,105 175,95 Z" fill="#1e1968"/>
</g>
<g transform="translate(76.7,135.8) scale(0.0582)">
<path d="M300,270 L517,515" stroke="#1e1968" stroke-width="56" stroke-linecap="round"/>
<path d="M345,212 C370,193 405,195 420,212 C440,225 452,248 448,262 C466,280 470,308 462,325 C473,345 470,375 458,388 C455,415 440,430 425,442 C410,465 385,480 360,488 C340,510 318,530 300,541 L265,548 L178,465 L225,400 C208,380 205,350 218,335 C214,310 226,292 245,284 L290,322 L322,312 L338,268 C325,245 330,225 345,212 Z" fill="url(#gHand)" stroke="#1c2a8a" stroke-width="9" stroke-linejoin="round"/>
<path d="M175,95 C205,85 250,95 275,120 C295,145 295,180 285,205 L336,262 L292,322 L240,248 C200,245 160,225 140,200 C128,185 122,170 125,160 C140,175 160,185 180,182 C200,178 212,160 212,145 C212,125 195,105 175,95 Z" fill="#1e1968"/>
</g>
<path d="M129.4,126.5V175" stroke="#14144a" stroke-width="2"/><path d="M113.5,153.8H126" stroke="#14144a" stroke-width="1.2"/><path d="M128.3,153.8l-5.5,-3.2l1.6,3.2l-1.6,3.2z" fill="#14144a"/>
<g><rect x="893.6" y="25.2" width="24" height="35.4" rx="3.5" fill="#b4cdf0"/><rect x="896.3" y="29" width="18.6" height="7.4" rx="2" fill="#bfe3a6"/><rect x="896.6" y="41.0" width="3.3" height="3" rx="1" fill="#f2f6fc"/><rect x="901.5" y="41.0" width="3.3" height="3" rx="1" fill="#f2f6fc"/><rect x="906.4" y="41.0" width="3.3" height="3" rx="1" fill="#f2f6fc"/><rect x="911.3" y="41.0" width="3.3" height="3" rx="1" fill="#f2f6fc"/><rect x="896.6" y="45.6" width="3.3" height="3" rx="1" fill="#f2f6fc"/><rect x="901.5" y="45.6" width="3.3" height="3" rx="1" fill="#f2f6fc"/><rect x="906.4" y="45.6" width="3.3" height="3" rx="1" fill="#f2f6fc"/><rect x="911.3" y="45.6" width="3.3" height="3" rx="1" fill="#f2f6fc"/><rect x="896.6" y="50.2" width="3.3" height="3" rx="1" fill="#f2f6fc"/><rect x="901.5" y="50.2" width="3.3" height="3" rx="1" fill="#f2f6fc"/><rect x="906.4" y="50.2" width="3.3" height="3" rx="1" fill="#f2f6fc"/><rect x="911.3" y="50.2" width="3.3" height="3" rx="1" fill="#f2f6fc"/><rect x="896.6" y="54.8" width="3.3" height="3" rx="1" fill="#f2f6fc"/><rect x="901.5" y="54.8" width="3.3" height="3" rx="1" fill="#f2f6fc"/><rect x="906.4" y="54.8" width="3.3" height="3" rx="1" fill="#f2f6fc"/><rect x="911.3" y="54.8" width="3.3" height="3" rx="1" fill="#f2f6fc"/></g>
<g><defs><linearGradient id="gGear" x1="0.7" y1="0" x2="0.3" y2="1"><stop offset="0" stop-color="#16206e"/><stop offset="0.55" stop-color="#0f5fc0"/><stop offset="1" stop-color="#2193ee"/></linearGradient></defs>
<rect x="189.4" y="112.4" width="23.4" height="22.8" rx="5.2" fill="#e4e7ec"/><rect x="190.3" y="113.3" width="21.6" height="21" rx="4.3" fill="#fff" stroke="#939cb0" stroke-width="1.5"/><circle cx="201.2" cy="123.7" r="8.5" fill="#fff" stroke="#c9c9cc" stroke-width="0.9"/>
<circle cx="201.2" cy="123.7" r="7.2" fill="url(#gGear)"/>
<circle cx="197.6" cy="120.6" r="3.3" fill="#fff"/><circle cx="197.6" cy="120.4" r="1.4" fill="#16206e"/>
<circle cx="203" cy="126" r="2.3" fill="none" stroke="#e6f0fc" stroke-width="1.5"/>
</g>
<g transform="translate(-0.5,0)"><rect x="26" y="190.500" width="15" height="15" fill="#2b7fd6"/><rect x="26" y="190.500" width="15" height="7" fill="#1c4aa8"/>
<circle cx="33.5" cy="198" r="6" fill="#e9eef6" stroke="#8a93a8" stroke-width="0.8"/><path d="M33.5,193.200l1.300,3.500l3.500,1.300l-3.500,1.300l-1.300,3.500l-1.300,-3.500l-3.500,-1.300l3.500,-1.300z" fill="#fff" stroke="#7a86a6" stroke-width="0.7"/></g>
<g fill="none"><rect x="49.5" y="190.500" width="15" height="15" fill="#d8dde6" stroke="none"/><path d="M55.500,190.800V205.200" stroke="#2a6fc8" stroke-width="1.4"/><path d="M50.500,194.500L63.500,202.500M50.800,201.500L62,195" stroke="#2a8fe0" stroke-width="1.2"/><rect x="58.200" y="192.200" width="3.600" height="5" stroke="#6a78b0" stroke-width="0.8" fill="#f2f4f8"/></g>
<g transform="translate(-0.5,0)"><circle cx="80.5" cy="198" r="7" fill="url(#gBall)"/><path d="M76.200,199.500l2.200,-2l1.600,2.200l2,-3.400l1.600,2.600l1.600,-1.200" fill="none" stroke="#e6f0ff" stroke-width="1"/></g>
<g transform="translate(-0.5,0)"><circle cx="110.5" cy="198" r="7.200" fill="#c5cbe0"/><circle cx="110.5" cy="198" r="6" fill="url(#gBall)"/><text x="110.5" y="202" text-anchor="middle" font-size="10.5" font-weight="700" fill="#fff">$</text></g>
<g fill="none" stroke="#6a7396" stroke-width="1"><rect x="126.500" y="190.500" width="15" height="15" fill="#dfe3ec" stroke="none"/><rect x="127.800" y="193.800" width="9.400" height="10" fill="#eceff5"/><path d="M127.800,193.800l3.400,-2.600h9.400v10l-3.400,2.600M137.200,193.800l3.400,-2.600"/></g>
<g transform="translate(-0.5,0)"><rect x="150" y="190.500" width="15" height="15" fill="#d5dbe8"/><g transform="translate(150.3,193.2) scale(0.4056,0.5333)"><path d="M6,18 C1.5,18 0,15.5 0.3,13.3 C0.6,11 2.6,9.8 4.6,10 C4.2,6.8 7.3,5 9.8,6.2 C10.8,2.3 15,0 18.8,0.6 C22.3,1.1 24.6,3.3 25.2,5.6 C27.8,4.6 31,6 31.3,9 C34.3,9 36.3,11.3 35.9,14 C35.6,16.6 33.6,18 31,18 Z" fill="#2a62b8"/><path d="M18.5,2.5 C21.8,2.2 24,4.2 24.6,6.8 C27.4,6 30,7.4 30.3,10.2 C32.6,10.2 34.4,11.8 34.3,13.8" fill="none" stroke="#8fc4f2" stroke-width="1.3" stroke-linecap="round"/></g></g>
<g><rect x="173.500" y="190.500" width="15" height="15" fill="#e4e8f0"/><circle cx="180" cy="197" r="4.600" fill="none" stroke="#7a86b0" stroke-width="1.3"/><circle cx="180" cy="197" r="2" fill="none" stroke="#9aa4c4" stroke-width="0.8"/><path d="M181,197.500l6.500,2.500l-2.800,1.200l2,3.200l-1.400,0.800l-2,-3.200l-2,2z" fill="#1f2a7a"/></g>
<g><circle cx="18" cy="251.2" r="8.600" fill="#e9e9ee" opacity="0.85"/><circle cx="18" cy="251.2" r="7.600" fill="url(#gRed)"/><rect x="17" y="246.2" width="2.200" height="6.400" rx="0.6" fill="#fff"/><rect x="17" y="253.79999999999998" width="2.200" height="2.200" rx="0.5" fill="#fff"/></g>
<g><circle cx="18" cy="279.7" r="8.600" fill="#e9e9ee" opacity="0.85"/><circle cx="18" cy="279.7" r="7.600" fill="url(#gRed)"/><rect x="17" y="274.7" width="2.200" height="6.400" rx="0.6" fill="#fff"/><rect x="17" y="282.3" width="2.200" height="2.200" rx="0.5" fill="#fff"/></g>
<g><circle cx="18" cy="308.2" r="8.600" fill="#e9e9ee" opacity="0.85"/><circle cx="18" cy="308.2" r="7.600" fill="url(#gYel)"/><rect x="17" y="303.2" width="2.200" height="6.400" rx="0.6" fill="#fff"/><rect x="17" y="310.8" width="2.200" height="2.200" rx="0.5" fill="#fff"/></g>
<g><circle cx="645.9" cy="583.400" r="9.600" fill="#e6e9ee" stroke="#1f2d7c" stroke-width="1.4"/>
<text x="645.9" y="587" text-anchor="middle" font-size="10" font-weight="700" fill="#111" textLength="13" lengthAdjust="spacingAndGlyphs">{..}</text></g>
<g>
<clipPath id="lgclip"><rect x="60" y="559.3" width="46" height="22.9"/></clipPath>
<rect x="70.5" y="559.3" width="25.5" height="22.9" fill="#0d0d0d"/>
<text x="50.55" y="580.6" font-size="27.6" font-weight="700" fill="#0d0d0d" stroke="#0d0d0d" stroke-width="3.2" stroke-linejoin="miter" textLength="22.3" lengthAdjust="spacingAndGlyphs">H</text>
<text x="93" y="580.6" font-size="27.6" font-weight="700" fill="#0d0d0d" stroke="#0d0d0d" stroke-width="3.2" stroke-linejoin="miter" textLength="36.9" lengthAdjust="spacingAndGlyphs">M</text><text x="130.6" y="580.6" font-size="27.6" font-weight="700" fill="#0d0d0d" stroke="#0d0d0d" stroke-width="3.2" stroke-linejoin="miter" textLength="13.4" lengthAdjust="spacingAndGlyphs">E</text><text x="146.4" y="580.6" font-size="27.6" font-weight="700" fill="#0d0d0d" stroke="#0d0d0d" stroke-width="3.2" stroke-linejoin="miter" textLength="16.5" lengthAdjust="spacingAndGlyphs">R</text>
<g clip-path="url(#lgclip)"><polygon points="98.20,570.60 92.87,571.40 98.01,573.02 92.62,572.98 97.44,575.39 92.12,574.50 96.51,577.64 91.40,575.93 95.24,579.71 90.46,577.22 93.66,581.56 89.32,578.36 91.81,583.14 88.03,579.30 89.74,584.41 86.60,580.02 87.49,585.34 85.08,580.52 85.12,585.91 83.50,580.77 82.70,586.10 81.90,580.77 80.28,585.91 80.32,580.52 77.91,585.34 78.80,580.02 75.66,584.41 77.37,579.30 73.59,583.14 76.08,578.36 71.74,581.56 74.94,577.22 70.16,579.71 74.00,575.93 68.89,577.64 73.28,574.50 67.96,575.39 72.78,572.98 67.39,573.02 72.53,571.40 67.20,570.60 72.53,569.80 67.39,568.18 72.78,568.22 67.96,565.81 73.28,566.70 68.89,563.56 74.00,565.27 70.16,561.49 74.94,563.98 71.74,559.64 76.08,562.84 73.59,558.06 77.37,561.90 75.66,556.79 78.80,561.18 77.91,555.86 80.32,560.68 80.28,555.29 81.90,560.43 82.70,555.10 83.50,560.43 85.12,555.29 85.08,560.68 87.49,555.86 86.60,561.18 89.74,556.79 88.03,561.90 91.81,558.06 89.32,562.84 93.66,559.64 90.46,563.98 95.24,561.49 91.40,565.27 96.51,563.56 92.12,566.70 97.44,565.81 92.62,568.22 98.01,568.18 92.87,569.80" fill="#fff"/></g>
<circle cx="82.7" cy="570.6" r="8.2" fill="#4267b2"/>
<rect x="67.7" y="584.4" width="75.5" height="17.6" rx="8.8" fill="#4267b2"/>
<text x="89.6" y="599.5" font-size="17.5" font-weight="700" fill="#fff" stroke="#fff" stroke-width="0.6" textLength="9.6" lengthAdjust="spacingAndGlyphs">P</text>
<text x="99.6" y="599.5" font-size="14.2" font-weight="700" fill="#fff" stroke="#fff" stroke-width="0.8" textLength="23" lengthAdjust="spacingAndGlyphs">RO</text>
</g>
</svg>
</div></body></html>
